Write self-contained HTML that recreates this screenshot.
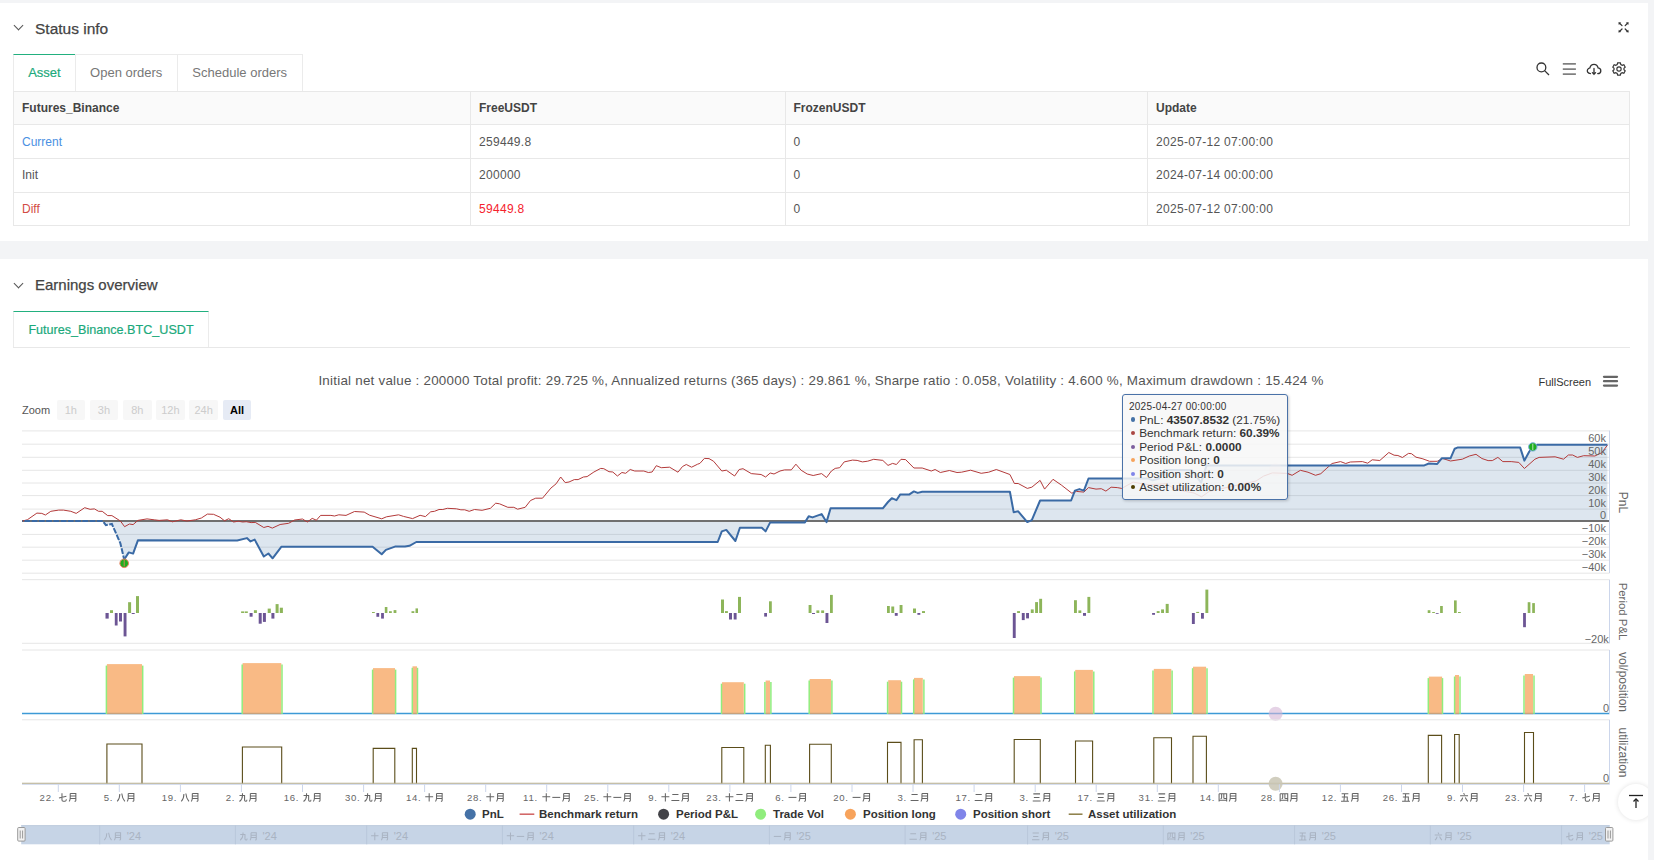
<!DOCTYPE html>
<html><head><meta charset="utf-8">
<style>
*{margin:0;padding:0;box-sizing:border-box}
html,body{width:1654px;height:860px;overflow:hidden;background:#f3f4f6;font-family:"Liberation Sans",sans-serif;color:#333}
.card{position:absolute;left:0;width:1648px;background:#fff}
.abs{position:absolute;white-space:nowrap}
.title{font-size:15.5px;color:#444;font-weight:400;-webkit-text-stroke:0.25px #444}
.chev{position:absolute;width:7px;height:7px;border-right:1.3px solid #555;border-bottom:1.3px solid #555;transform:rotate(45deg)}
.tabs{position:absolute;top:53px;left:13px;height:38px}
.tab{position:absolute;top:0;height:37px;border:1px solid #ebebeb;border-bottom:none;font-size:13px;color:#777;line-height:36px;text-align:center}
.tab.act{color:#1daa7c;border-top:1.5px solid #22b07f;line-height:35.5px;-webkit-text-stroke:0.2px #1daa7c}
table{position:absolute;left:13px;top:90.7px;width:1617px;border-collapse:collapse;font-size:12px;color:#555}
td,th{border:1px solid #e8e8e8;height:33.6px;padding:0 0 0 8px;text-align:left;vertical-align:middle}
th{background:#fafafa;font-weight:bold;color:#444;height:33.8px}
td.n{letter-spacing:0.3px}
svg text{font-family:"Liberation Sans",sans-serif}
.yl{font-size:11px;fill:#666}
.at{font-size:12px;fill:#666}
.xl{font-size:9.6px;fill:#666;letter-spacing:0.7px}
.lg{font-size:11.5px;font-weight:bold;fill:#333}
.nl{font-size:11px;fill:#a9b3c2}
.zb{position:absolute;top:400px;width:28.5px;height:19.7px;border-radius:2px;background:#f7f7f7;color:#ccc;font-size:11px;text-align:center;line-height:20px}
.tt{position:absolute;left:1122px;top:393.5px;width:165.5px;height:106.5px;background:rgba(247,247,247,0.85);border:1px solid #4a72a8;border-radius:3px;box-shadow:1px 1px 3px rgba(0,0,0,0.2);font-size:11.5px;color:#333;padding:6px 0 0 6px}
.tth{font-size:10px;line-height:12px;margin-bottom:1px;letter-spacing:0.25px}
.ttr{line-height:13.6px;white-space:nowrap;font-size:11.8px}
.ttr .d{display:inline-block;width:4.2px;height:4.2px;border-radius:50%;margin:0 4px 0 2px;vertical-align:2px}
</style></head>
<body>
<!-- card 1 -->
<div class="card" style="top:3px;height:238px">
  <div class="chev" style="left:15px;top:18.6px"></div>
  <div class="abs title" style="left:35px;top:16.5px">Status info</div>
  <svg class="abs" style="left:1612px;top:13px" width="22" height="22" viewBox="1612 16 22 22">
    <g stroke="#333" stroke-width="1.25" fill="none" stroke-linecap="round">
     <line x1="1622" y1="25.6" x2="1619.6" y2="23.3"/><line x1="1625.2" y1="25.6" x2="1627.5" y2="23.3"/>
     <line x1="1622" y1="29" x2="1619.6" y2="31.4"/><line x1="1625.2" y1="29" x2="1627.5" y2="31.4"/>
    </g>
    <g fill="#333">
     <path d="M1618.4 22.2 L1621.2 22.6 L1618.8 25 Z"/><path d="M1628.7 22.2 L1625.9 22.6 L1628.3 25 Z"/>
     <path d="M1618.4 32.5 L1621.2 32.1 L1618.8 29.7 Z"/><path d="M1628.7 32.5 L1625.9 32.1 L1628.3 29.7 Z"/>
    </g>
  </svg>
</div>
<div class="tabs" style="top:54px">
  <div class="tab act" style="left:0;width:62.8px">Asset</div>
  <div class="tab" style="left:62.3px;width:102.9px;border-left:none">Open orders</div>
  <div class="tab" style="left:164.2px;width:126px;border-left:none">Schedule orders</div>
</div>
</div>
<svg class="abs" style="left:1530px;top:55px" width="104" height="28" viewBox="1530 55 104 28">
  <g stroke="#333" stroke-width="1.3" fill="none">
    <circle cx="1541.4" cy="67.4" r="4.4"/>
    <line x1="1544.6" y1="70.6" x2="1549" y2="75"/>
  </g>
  <g stroke="#555" stroke-width="1.3">
    <line x1="1562.8" y1="63.9" x2="1575.9" y2="63.9"/>
    <line x1="1562.8" y1="69.1" x2="1575.9" y2="69.1"/>
    <line x1="1562.8" y1="74.1" x2="1575.9" y2="74.1"/>
  </g>
  <g stroke="#333" stroke-width="1.3" fill="none" stroke-linecap="round">
    <path d="M1590.5 73.6 C1587.6 73.6 1586.8 71.2 1587.6 69.5 C1588.3 68.3 1589.3 68 1589.9 67.9 C1590.5 65.2 1592.3 64.4 1594 64.4 C1595.8 64.4 1597.5 65.5 1598.1 67.9 C1599.6 68.1 1600.9 69.2 1600.8 71.1 C1600.7 72.9 1599.4 73.6 1597.7 73.6"/>
    <path d="M1594 68.5 V74.3 M1592.4 72.6 L1594 74.3 L1595.6 72.6"/>
  </g>
  <g stroke="#333" stroke-width="1.25" fill="none" transform="translate(1619 69) scale(0.9) translate(-1619 -69)">
    <path d="M1617.5 62.2 L1620.5 62.2 L1621 64 L1622.6 64.9 L1624.4 64.3 L1625.9 66.9 L1624.5 68.2 L1624.5 69.8 L1625.9 71.1 L1624.4 73.7 L1622.6 73.1 L1621 74 L1620.5 75.8 L1617.5 75.8 L1617 74 L1615.4 73.1 L1613.6 73.7 L1612.1 71.1 L1613.5 69.8 L1613.5 68.2 L1612.1 66.9 L1613.6 64.3 L1615.4 64.9 L1617 64 Z"/>
    <circle cx="1619" cy="69" r="2.4"/>
  </g>
</svg>
<table>
 <tr><th style="width:457px">Futures_Binance</th><th style="width:314.5px">FreeUSDT</th><th style="width:362.5px">FrozenUSDT</th><th>Update</th></tr>
 <tr><td style="color:#4a90e2">Current</td><td class="n">259449.8</td><td class="n">0</td><td class="n">2025-07-12 07:00:00</td></tr>
 <tr><td>Init</td><td class="n">200000</td><td class="n">0</td><td class="n">2024-07-14 00:00:00</td></tr>
 <tr><td style="color:#d24b44">Diff</td><td class="n" style="color:#f5222d">59449.8</td><td class="n">0</td><td class="n">2025-07-12 07:00:00</td></tr>
</table>

<!-- card 2 -->
<div class="card" style="top:259px;height:601px">
  <div class="chev" style="left:15px;top:21px"></div>
  <div class="abs title" style="left:35px;top:17px;font-size:15px">Earnings overview</div>
</div>
<div class="tabs" style="top:311px;height:36px">
  <div class="tab act" style="left:0;width:196px;height:36px;color:#1aa97b;font-size:12.6px;line-height:36.5px">Futures_Binance.BTC_USDT</div>
</div>
<div class="abs" style="left:13px;top:347px;width:1617px;height:1px;background:#e8e8e8"></div>

<div class="abs" style="left:0;top:372.5px;width:1642px;text-align:center;font-size:13.4px;letter-spacing:0.23px;color:#555">Initial net value : 200000 Total profit: 29.725 %, Annualized returns (365 days) : 29.861 %, Sharpe ratio : 0.058, Volatility : 4.600 %, Maximum drawdown : 15.424 %</div>
<div class="abs" style="left:1538.5px;top:376px;font-size:11px;color:#333">FullScreen</div>
<svg class="abs" style="left:1600px;top:373px" width="20" height="16"><g stroke="#666" stroke-width="2.3" stroke-linecap="round"><line x1="4" y1="3.8" x2="17" y2="3.8"/><line x1="4" y1="8.2" x2="17" y2="8.2"/><line x1="4" y1="12.6" x2="17" y2="12.6"/></g></svg>

<div class="abs" style="left:22px;top:404px;font-size:11px;color:#555">Zoom</div>
<div class="zb" style="left:56.5px">1h</div>
<div class="zb" style="left:89.7px">3h</div>
<div class="zb" style="left:123px">8h</div>
<div class="zb" style="left:156.2px">12h</div>
<div class="zb" style="left:189.4px">24h</div>
<div class="zb" style="left:222.8px;background:#e6ebf5;color:#000;font-weight:bold">All</div>

<svg class="abs" style="left:0;top:0" width="1654" height="860" viewBox="0 0 1654 860">
<line x1="22" y1="430.9" x2="1609.5" y2="430.9" stroke="#e6e6e6" stroke-width="1"/>
<line x1="22" y1="444.2" x2="1609.5" y2="444.2" stroke="#e6e6e6" stroke-width="1"/>
<line x1="22" y1="457.3" x2="1609.5" y2="457.3" stroke="#e6e6e6" stroke-width="1"/>
<line x1="22" y1="470.3" x2="1609.5" y2="470.3" stroke="#e6e6e6" stroke-width="1"/>
<line x1="22" y1="483" x2="1609.5" y2="483" stroke="#e6e6e6" stroke-width="1"/>
<line x1="22" y1="495.6" x2="1609.5" y2="495.6" stroke="#e6e6e6" stroke-width="1"/>
<line x1="22" y1="509.1" x2="1609.5" y2="509.1" stroke="#e6e6e6" stroke-width="1"/>
<line x1="22" y1="534.4" x2="1609.5" y2="534.4" stroke="#e6e6e6" stroke-width="1"/>
<line x1="22" y1="547.2" x2="1609.5" y2="547.2" stroke="#e6e6e6" stroke-width="1"/>
<line x1="22" y1="560.2" x2="1609.5" y2="560.2" stroke="#e6e6e6" stroke-width="1"/>
<line x1="22" y1="573.2" x2="1609.5" y2="573.2" stroke="#e6e6e6" stroke-width="1"/>
<path d="M22.4,521 L22.4,521.0 L102.8,521.0 L105.9,525.2 L111.9,524.0 L116.7,534.9 L120.4,543.4 L124.2,559.5 L128.8,552.4 L133.1,553.6 L137.9,540.3 L237.2,540.5 L246.9,538.1 L250.5,541.4 L254.7,539.6 L263.8,556.5 L268.4,553.5 L272.6,558.3 L281.3,546.8 L372.6,546.8 L381.7,554.3 L385.9,549.9 L395.0,546.6 L405.0,546.6 L409.5,545.8 L416.3,542.0 L717.7,542.0 L721.8,531.4 L726.3,529.9 L735.4,541.0 L739.9,527.7 L761.8,527.7 L765.6,531.4 L770.2,522.4 L804.9,522.4 L808.7,516.3 L812.5,517.4 L821.6,514.1 L826.5,522.1 L830.6,508.3 L882.8,508.3 L888.0,502.0 L891.8,498.2 L896.4,500.2 L900.3,494.4 L909.4,494.4 L913.9,491.4 L917.7,492.9 L922.2,491.8 L1009.9,491.8 L1013.7,512.2 L1018.2,511.3 L1027.3,522.1 L1031.8,520.1 L1040.1,500.5 L1071.1,500.5 L1074.9,490.6 L1079.4,489.1 L1083.9,490.6 L1088.5,478.5 L1148.3,478.5 L1152.6,480.3 L1159.2,478.5 L1164.6,470.1 L1191.8,470.1 L1201.1,482.6 L1206.5,465.6 L1424.3,465.4 L1428.9,463.5 L1437.2,464.0 L1441.7,458.3 L1450.5,458.3 L1454.7,448.7 L1457.4,447.6 L1520.2,447.6 L1524.4,460.6 L1529.3,451.5 L1532.8,447.0 L1537.0,444.8 L1607.4,444.8 L1607.4,521 Z" fill="#4572a7" fill-opacity="0.18"/>
<line x1="22" y1="521" x2="1609.5" y2="521" stroke="#707070" stroke-width="2"/>
<polyline points="22.4,521.0 27.3,519.8 36.9,513.1 41.8,513.4 45.4,515.0 50.8,511.3 58.7,510.1 63.5,510.1 70.8,511.3 76.2,513.4 84.7,507.7 90.1,509.3 94.4,508.9 98.6,511.3 102.2,511.3 107.7,515.6 111.9,515.6 120.4,521.0 124.6,526.7 129.4,524.0 133.1,524.6 137.9,520.4 147.0,518.9 154.2,519.8 159.1,520.4 167.5,519.8 172.4,521.8 180.8,519.8 186.9,521.0 195.3,519.8 201.4,518.0 207.4,514.1 213.5,514.3 220.0,517.2 224.5,520.8 228.7,518.7 233.6,522.0 238.4,521.2 242.6,522.0 246.3,521.7 251.1,522.6 255.3,522.4 263.8,527.5 268.0,526.3 272.3,528.1 280.1,524.5 288.6,523.3 294.6,520.0 302.5,519.0 307.3,522.0 312.2,518.4 316.4,520.2 320.6,515.4 330.9,515.4 334.5,516.0 338.8,514.8 346.0,515.4 354.5,511.5 364.2,512.1 369.6,515.2 381.7,518.8 386.5,516.8 398.6,514.8 403.5,516.4 412.6,518.6 420.1,515.3 425.4,516.6 430.7,511.8 434.5,511.3 439.0,509.5 442.8,509.5 447.3,508.3 456.4,508.8 460.9,509.8 464.7,509.8 469.2,511.3 474.5,509.5 482.1,510.3 490.4,508.3 495.7,503.2 499.5,503.8 507.8,507.3 513.8,507.3 517.6,509.2 525.2,507.3 530.5,500.5 535.7,498.2 542.5,498.2 550.9,488.1 556.1,483.8 560.7,477.0 565.2,482.6 569.0,482.0 574.3,479.6 578.1,479.6 583.4,477.0 587.1,476.6 593.9,472.0 600.7,468.4 603.8,468.7 609.0,471.7 612.8,472.0 617.4,476.0 621.9,472.5 625.7,473.3 630.2,469.5 634.7,471.0 643.8,471.0 648.3,472.5 652.1,472.0 656.3,465.7 661.3,467.7 669.6,467.2 678.0,472.2 682.5,466.5 686.3,464.5 691.6,467.2 697.6,464.2 699.9,463.4 704.4,458.4 709.0,458.6 713.5,461.2 721.8,471.0 726.3,470.2 734.6,476.0 739.2,469.5 743.0,468.7 751.3,473.6 761.1,474.5 765.6,477.0 770.2,473.0 774.0,474.0 780.0,471.0 784.5,469.9 791.3,469.9 795.9,464.2 801.1,470.2 807.2,474.0 813.2,475.5 821.6,473.6 826.5,477.5 831.4,471.0 835.2,468.4 839.7,467.7 844.2,461.9 852.5,460.1 857.1,460.4 862.4,461.9 867.7,461.2 873.7,459.3 882.8,460.4 888.0,465.4 892.6,463.4 896.4,464.5 901.0,459.3 905.6,459.6 913.9,468.0 922.2,468.0 931.3,471.0 935.1,469.5 940.3,472.5 949.4,470.5 957.0,472.5 961.5,472.2 970.6,470.2 981.2,473.3 988.7,472.2 996.3,469.5 1009.9,474.5 1014.4,483.5 1018.2,483.5 1027.3,488.4 1031.8,487.2 1040.1,480.4 1044.6,489.1 1053.0,479.3 1061.3,485.0 1071.8,493.2 1076.4,491.4 1083.9,492.1 1088.5,487.6 1096.0,489.1 1101.3,488.7 1105.9,491.1 1111.1,487.2 1117.2,487.6 1121.7,488.4 1133.1,482.1 1141.8,483.7 1149.4,484.8 1165.7,483.7 1175.5,489.2 1185.3,491.4 1194.0,493.0 1201.6,496.8 1209.2,491.4 1228.8,487.0 1256.0,481.0 1263.6,476.1 1272.4,472.9 1287.3,473.4 1292.1,475.3 1300.4,470.3 1308.0,472.2 1315.5,475.3 1320.8,473.7 1326.9,468.1 1332.1,463.5 1340.5,461.6 1345.7,463.5 1350.3,462.0 1362.4,461.6 1367.7,463.2 1372.2,459.8 1379.8,460.5 1388.8,452.5 1394.1,455.2 1397.9,455.5 1402.4,457.5 1408.5,453.4 1411.5,453.7 1416.0,457.2 1422.1,458.6 1429.6,461.3 1437.2,461.3 1442.8,458.5 1450.5,461.0 1462.3,459.2 1469.3,456.0 1476.0,454.3 1481.9,458.5 1488.1,460.6 1492.3,460.6 1497.9,457.4 1502.8,461.6 1511.2,461.6 1518.8,462.4 1524.4,468.5 1534.9,459.2 1539.1,457.4 1555.1,456.8 1563.5,459.2 1568.4,455.0 1572.6,455.0 1577.4,457.4 1583.7,455.7 1594.9,456.0 1601.9,452.6 1607.4,445.2" fill="none" stroke="#b33a3a" stroke-width="1" stroke-linejoin="round"/>
<polyline points="22.4,521.0 102.8,521.0 105.9,525.2 111.9,524.0 116.7,534.9 120.4,543.4 124.2,559.5" fill="none" stroke="#3a6aa5" stroke-width="2" stroke-dasharray="5.8,1.45" stroke-dashoffset="-2"/>
<polyline points="124.2,559.5 128.8,552.4 133.1,553.6 137.9,540.3 237.2,540.5 246.9,538.1 250.5,541.4 254.7,539.6 263.8,556.5 268.4,553.5 272.6,558.3 281.3,546.8 372.6,546.8 381.7,554.3 385.9,549.9 395.0,546.6 405.0,546.6 409.5,545.8 416.3,542.0 717.7,542.0 721.8,531.4 726.3,529.9 735.4,541.0 739.9,527.7 761.8,527.7 765.6,531.4 770.2,522.4 804.9,522.4 808.7,516.3 812.5,517.4 821.6,514.1 826.5,522.1 830.6,508.3 882.8,508.3 888.0,502.0 891.8,498.2 896.4,500.2 900.3,494.4 909.4,494.4 913.9,491.4 917.7,492.9 922.2,491.8 1009.9,491.8 1013.7,512.2 1018.2,511.3 1027.3,522.1 1031.8,520.1 1040.1,500.5 1071.1,500.5 1074.9,490.6 1079.4,489.1 1083.9,490.6 1088.5,478.5 1148.3,478.5 1152.6,480.3 1159.2,478.5 1164.6,470.1 1191.8,470.1 1201.1,482.6 1206.5,465.6 1424.3,465.4 1428.9,463.5 1437.2,464.0 1441.7,458.3 1450.5,458.3 1454.7,448.7 1457.4,447.6 1520.2,447.6 1524.4,460.6 1529.3,451.5 1532.8,447.0 1537.0,444.8 1607.4,444.8" fill="none" stroke="#3a6aa5" stroke-width="2" stroke-linejoin="round"/>
<circle cx="124.2" cy="563.3" r="4.3" fill="#1fae1f" stroke="#f08060" stroke-width="1"/>
<line x1="124.2" y1="560" x2="124.2" y2="566.5" stroke="#f08060" stroke-width="0.8"/>
<circle cx="1532.8" cy="446.9" r="4.2" fill="#1fae1f" stroke="#7ab0e0" stroke-width="1"/>
<line x1="1532.8" y1="443.7" x2="1532.8" y2="450" stroke="#e0f0e0" stroke-width="0.8"/>
<circle cx="1275.6" cy="469.6" r="6.5" fill="#f0c0c0" fill-opacity="0.25"/>
<text x="1606" y="442.4" text-anchor="end" class="yl">60k</text>
<text x="1606" y="455.4" text-anchor="end" class="yl">50k</text>
<text x="1606" y="468.4" text-anchor="end" class="yl">40k</text>
<text x="1606" y="481.4" text-anchor="end" class="yl">30k</text>
<text x="1606" y="494.4" text-anchor="end" class="yl">20k</text>
<text x="1606" y="507.4" text-anchor="end" class="yl">10k</text>
<text x="1606" y="519.4" text-anchor="end" class="yl">0</text>
<text x="1606" y="532.4" text-anchor="end" class="yl">−10k</text>
<text x="1606" y="545.4" text-anchor="end" class="yl">−20k</text>
<text x="1606" y="558.4" text-anchor="end" class="yl">−30k</text>
<text x="1606" y="571.4" text-anchor="end" class="yl">−40k</text>
<line x1="1609.5" y1="430.5" x2="1609.5" y2="573" stroke="#ccd6eb" stroke-width="1"/>
<text class="at" transform="translate(1618.5,502.5) rotate(90)" text-anchor="middle">PnL</text>
<line x1="22" y1="579.7" x2="1609.5" y2="579.7" stroke="#e6e6e6"/>
<line x1="22" y1="643.3" x2="1609.5" y2="643.3" stroke="#e6e6e6"/>
<rect x="110.0" y="610.2" width="3.0" height="2.8" fill="#8db55a"/>
<rect x="128.1" y="602.2" width="3.0" height="10.8" fill="#8db55a"/>
<rect x="136.0" y="596.1" width="3.0" height="16.9" fill="#8db55a"/>
<rect x="241.1" y="611.4" width="3.1" height="1.6" fill="#8db55a"/>
<rect x="244.8" y="611.4" width="3.0" height="1.6" fill="#8db55a"/>
<rect x="253.9" y="610.2" width="3.0" height="2.8" fill="#8db55a"/>
<rect x="267.7" y="608.6" width="3.1" height="4.4" fill="#8db55a"/>
<rect x="275.6" y="604.1" width="3.0" height="8.9" fill="#8db55a"/>
<rect x="279.8" y="607.7" width="3.1" height="5.3" fill="#8db55a"/>
<rect x="372.0" y="612.0" width="2.8" height="1.0" fill="#8db55a"/>
<rect x="384.8" y="607.0" width="2.6" height="6.0" fill="#8db55a"/>
<rect x="389.0" y="611.2" width="2.8" height="1.8" fill="#8db55a"/>
<rect x="393.6" y="610.1" width="2.8" height="2.9" fill="#8db55a"/>
<rect x="411.5" y="611.2" width="2.8" height="1.8" fill="#8db55a"/>
<rect x="415.5" y="608.4" width="2.5" height="4.6" fill="#8db55a"/>
<rect x="721.0" y="599.5" width="3.0" height="13.5" fill="#8db55a"/>
<rect x="725.0" y="611.1" width="2.9" height="1.9" fill="#8db55a"/>
<rect x="738.0" y="596.9" width="3.0" height="16.1" fill="#8db55a"/>
<rect x="769.0" y="601.3" width="2.8" height="11.7" fill="#8db55a"/>
<rect x="808.6" y="605.0" width="2.9" height="8.0" fill="#8db55a"/>
<rect x="816.4" y="610.4" width="2.9" height="2.6" fill="#8db55a"/>
<rect x="821.2" y="610.4" width="2.9" height="2.6" fill="#8db55a"/>
<rect x="830.0" y="594.9" width="2.8" height="18.1" fill="#8db55a"/>
<rect x="887.0" y="606.0" width="2.8" height="7.0" fill="#8db55a"/>
<rect x="891.3" y="606.5" width="2.9" height="6.5" fill="#8db55a"/>
<rect x="899.6" y="605.0" width="2.9" height="8.0" fill="#8db55a"/>
<rect x="913.0" y="608.5" width="3.0" height="4.5" fill="#8db55a"/>
<rect x="922.0" y="611.1" width="3.0" height="1.9" fill="#8db55a"/>
<rect x="1017.1" y="611.1" width="2.9" height="1.9" fill="#8db55a"/>
<rect x="1030.8" y="609.4" width="2.9" height="3.6" fill="#8db55a"/>
<rect x="1035.1" y="602.1" width="2.9" height="10.9" fill="#8db55a"/>
<rect x="1039.2" y="598.8" width="2.9" height="14.2" fill="#8db55a"/>
<rect x="1074.0" y="600.2" width="2.9" height="12.8" fill="#8db55a"/>
<rect x="1078.4" y="610.4" width="2.9" height="2.6" fill="#8db55a"/>
<rect x="1087.4" y="596.9" width="2.9" height="16.1" fill="#8db55a"/>
<rect x="1156.7" y="611.1" width="2.9" height="1.9" fill="#8db55a"/>
<rect x="1161.1" y="609.4" width="2.9" height="3.6" fill="#8db55a"/>
<rect x="1165.7" y="603.9" width="3.0" height="9.1" fill="#8db55a"/>
<rect x="1196.2" y="611.9" width="2.9" height="1.1" fill="#8db55a"/>
<rect x="1205.4" y="589.6" width="2.9" height="23.4" fill="#8db55a"/>
<rect x="1427.7" y="610.2" width="2.7" height="2.8" fill="#8db55a"/>
<rect x="1432.2" y="612.0" width="2.7" height="1.0" fill="#8db55a"/>
<rect x="1440.1" y="606.0" width="2.7" height="7.0" fill="#8db55a"/>
<rect x="1454.0" y="600.4" width="2.7" height="12.6" fill="#8db55a"/>
<rect x="1458.0" y="612.0" width="2.8" height="1.0" fill="#8db55a"/>
<rect x="1527.7" y="602.2" width="2.7" height="10.8" fill="#8db55a"/>
<rect x="1532.2" y="603.1" width="2.7" height="9.9" fill="#8db55a"/>
<rect x="105.5" y="613" width="3.2" height="5.6" fill="#6c5594"/>
<rect x="114.8" y="613" width="2.8" height="12.5" fill="#6c5594"/>
<rect x="119.0" y="613" width="3.0" height="8.5" fill="#6c5594"/>
<rect x="123.6" y="613" width="2.9" height="23.4" fill="#6c5594"/>
<rect x="131.7" y="613" width="3.0" height="1.0" fill="#6c5594"/>
<rect x="249.6" y="613" width="3.0" height="3.7" fill="#6c5594"/>
<rect x="258.7" y="613" width="3.0" height="10.7" fill="#6c5594"/>
<rect x="262.9" y="613" width="3.0" height="8.9" fill="#6c5594"/>
<rect x="271.4" y="613" width="3.0" height="5.6" fill="#6c5594"/>
<rect x="376.4" y="613" width="2.8" height="3.8" fill="#6c5594"/>
<rect x="381.1" y="613" width="2.8" height="5.6" fill="#6c5594"/>
<rect x="729.0" y="613" width="3.0" height="6.5" fill="#6c5594"/>
<rect x="733.7" y="613" width="2.9" height="6.5" fill="#6c5594"/>
<rect x="764.2" y="613" width="2.8" height="3.6" fill="#6c5594"/>
<rect x="812.0" y="613" width="3.0" height="1.0" fill="#6c5594"/>
<rect x="825.5" y="613" width="2.9" height="10.0" fill="#6c5594"/>
<rect x="894.8" y="613" width="2.9" height="2.8" fill="#6c5594"/>
<rect x="917.4" y="613" width="2.9" height="1.8" fill="#6c5594"/>
<rect x="1012.8" y="613" width="2.9" height="25.0" fill="#6c5594"/>
<rect x="1021.8" y="613" width="2.9" height="7.1" fill="#6c5594"/>
<rect x="1026.1" y="613" width="2.9" height="5.4" fill="#6c5594"/>
<rect x="1083.0" y="613" width="3.0" height="2.8" fill="#6c5594"/>
<rect x="1152.1" y="613" width="2.9" height="1.8" fill="#6c5594"/>
<rect x="1191.9" y="613" width="2.9" height="11.0" fill="#6c5594"/>
<rect x="1201.0" y="613" width="2.9" height="5.7" fill="#6c5594"/>
<rect x="1435.8" y="613" width="2.8" height="0.8" fill="#6c5594"/>
<rect x="1523.1" y="613" width="2.8" height="14.2" fill="#6c5594"/>
<line x1="1609.5" y1="579.7" x2="1609.5" y2="643.3" stroke="#ccd6eb"/>
<text x="1608.8" y="642.8" text-anchor="end" class="yl">−20k</text>
<text class="at" style="font-size:11.4px" transform="translate(1618.5,611.5) rotate(90)" text-anchor="middle">Period P&amp;L</text>
<line x1="22" y1="650" x2="1609.5" y2="650" stroke="#e6e6e6"/>
<line x1="22" y1="713.5" x2="1609.5" y2="713.5" stroke="#3d9ad6" stroke-width="1.4"/>
<rect x="106.9" y="664.1" width="35.1" height="50.1" fill="#f7a35c" fill-opacity="0.75"/>
<line x1="106.4" y1="665.6" x2="106.4" y2="714" stroke="#90ed7d" stroke-width="1.5"/>
<line x1="142.7" y1="665.6" x2="142.7" y2="714" stroke="#90ed7d" stroke-width="1.5"/>
<rect x="242.6" y="663.1" width="38.7" height="51.1" fill="#f7a35c" fill-opacity="0.75"/>
<line x1="242.2" y1="664.6" x2="242.2" y2="714" stroke="#90ed7d" stroke-width="1.5"/>
<line x1="282.0" y1="664.6" x2="282.0" y2="714" stroke="#90ed7d" stroke-width="1.5"/>
<rect x="373.0" y="668.1" width="22.0" height="46.1" fill="#f7a35c" fill-opacity="0.75"/>
<line x1="372.6" y1="669.6" x2="372.6" y2="714" stroke="#90ed7d" stroke-width="1.5"/>
<line x1="395.6" y1="669.6" x2="395.6" y2="714" stroke="#90ed7d" stroke-width="1.5"/>
<rect x="412.5" y="666.3" width="4.5" height="47.9" fill="#f7a35c" fill-opacity="0.75"/>
<line x1="412.3" y1="667.8" x2="412.3" y2="714" stroke="#90ed7d" stroke-width="1.5"/>
<line x1="417.5" y1="667.8" x2="417.5" y2="714" stroke="#90ed7d" stroke-width="1.5"/>
<rect x="722.0" y="682.2" width="21.8" height="32.0" fill="#f7a35c" fill-opacity="0.75"/>
<line x1="721.5" y1="683.7" x2="721.5" y2="714" stroke="#90ed7d" stroke-width="1.5"/>
<line x1="744.7" y1="683.7" x2="744.7" y2="714" stroke="#90ed7d" stroke-width="1.5"/>
<rect x="765.6" y="680.5" width="4.4" height="33.7" fill="#f7a35c" fill-opacity="0.75"/>
<line x1="764.9" y1="682.0" x2="764.9" y2="714" stroke="#90ed7d" stroke-width="1.5"/>
<line x1="770.9" y1="682.0" x2="770.9" y2="714" stroke="#90ed7d" stroke-width="1.5"/>
<rect x="809.6" y="679.0" width="21.4" height="35.2" fill="#f7a35c" fill-opacity="0.75"/>
<line x1="809.2" y1="680.5" x2="809.2" y2="714" stroke="#90ed7d" stroke-width="1.5"/>
<line x1="831.9" y1="680.5" x2="831.9" y2="714" stroke="#90ed7d" stroke-width="1.5"/>
<rect x="888.2" y="680.2" width="12.8" height="34.0" fill="#f7a35c" fill-opacity="0.75"/>
<line x1="887.6" y1="681.7" x2="887.6" y2="714" stroke="#90ed7d" stroke-width="1.5"/>
<line x1="901.5" y1="681.7" x2="901.5" y2="714" stroke="#90ed7d" stroke-width="1.5"/>
<rect x="914.0" y="677.9" width="8.8" height="36.3" fill="#f7a35c" fill-opacity="0.75"/>
<line x1="913.7" y1="679.4" x2="913.7" y2="714" stroke="#90ed7d" stroke-width="1.5"/>
<line x1="923.9" y1="679.4" x2="923.9" y2="714" stroke="#90ed7d" stroke-width="1.5"/>
<rect x="1014.0" y="676.1" width="26.3" height="38.1" fill="#f7a35c" fill-opacity="0.75"/>
<line x1="1013.5" y1="677.6" x2="1013.5" y2="714" stroke="#90ed7d" stroke-width="1.5"/>
<line x1="1041.0" y1="677.6" x2="1041.0" y2="714" stroke="#90ed7d" stroke-width="1.5"/>
<rect x="1075.2" y="669.9" width="17.7" height="44.3" fill="#f7a35c" fill-opacity="0.75"/>
<line x1="1074.7" y1="671.4" x2="1074.7" y2="714" stroke="#90ed7d" stroke-width="1.5"/>
<line x1="1093.8" y1="671.4" x2="1093.8" y2="714" stroke="#90ed7d" stroke-width="1.5"/>
<rect x="1153.8" y="668.9" width="17.5" height="45.3" fill="#f7a35c" fill-opacity="0.75"/>
<line x1="1153.0" y1="670.4" x2="1153.0" y2="714" stroke="#90ed7d" stroke-width="1.5"/>
<line x1="1172.1" y1="670.4" x2="1172.1" y2="714" stroke="#90ed7d" stroke-width="1.5"/>
<rect x="1193.0" y="666.7" width="13.1" height="47.5" fill="#f7a35c" fill-opacity="0.75"/>
<line x1="1192.6" y1="668.2" x2="1192.6" y2="714" stroke="#90ed7d" stroke-width="1.5"/>
<line x1="1207.0" y1="668.2" x2="1207.0" y2="714" stroke="#90ed7d" stroke-width="1.5"/>
<rect x="1428.8" y="676.6" width="13.3" height="37.6" fill="#f7a35c" fill-opacity="0.75"/>
<line x1="1428.3" y1="678.1" x2="1428.3" y2="714" stroke="#90ed7d" stroke-width="1.5"/>
<line x1="1442.5" y1="678.1" x2="1442.5" y2="714" stroke="#90ed7d" stroke-width="1.5"/>
<rect x="1455.0" y="675.0" width="4.0" height="39.2" fill="#f7a35c" fill-opacity="0.75"/>
<line x1="1454.6" y1="676.5" x2="1454.6" y2="714" stroke="#90ed7d" stroke-width="1.5"/>
<line x1="1460.0" y1="676.5" x2="1460.0" y2="714" stroke="#90ed7d" stroke-width="1.5"/>
<rect x="1524.8" y="674.0" width="8.2" height="40.2" fill="#f7a35c" fill-opacity="0.75"/>
<line x1="1524.0" y1="675.5" x2="1524.0" y2="714" stroke="#90ed7d" stroke-width="1.5"/>
<line x1="1534.0" y1="675.5" x2="1534.0" y2="714" stroke="#90ed7d" stroke-width="1.5"/>
<line x1="1609.5" y1="650" x2="1609.5" y2="714" stroke="#ccd6eb"/>
<text x="1609" y="712.4" text-anchor="end" class="yl">0</text>
<text class="at" transform="translate(1618.5,682) rotate(90)" text-anchor="middle">vol/position</text>
<circle cx="1275.6" cy="713.8" r="7" fill="#d4b6d6" fill-opacity="0.6"/>
<line x1="22" y1="719.8" x2="1609.5" y2="719.8" stroke="#e6e6e6"/>
<line x1="22" y1="784.3" x2="1609.5" y2="784.3" stroke="#ccd6eb" stroke-width="1"/>
<polyline points="106.9,783.4 106.9,744 142,744 142,783.4" fill="none" stroke="#5b4d1a" stroke-width="1.1"/>
<polyline points="242.4,783.4 242.4,747 281.7,747 281.7,783.4" fill="none" stroke="#5b4d1a" stroke-width="1.1"/>
<polyline points="373.2,783.4 373.2,748.4 394.8,748.4 394.8,783.4" fill="none" stroke="#5b4d1a" stroke-width="1.1"/>
<polyline points="412.3,783.4 412.3,748.4 416.5,748.4 416.5,783.4" fill="none" stroke="#5b4d1a" stroke-width="1.1"/>
<polyline points="721.8,783.4 721.8,747.5 743.8,747.5 743.8,783.4" fill="none" stroke="#5b4d1a" stroke-width="1.1"/>
<polyline points="765.3,783.4 765.3,745.3 770.4,745.3 770.4,783.4" fill="none" stroke="#5b4d1a" stroke-width="1.1"/>
<polyline points="809.6,783.4 809.6,744.3 831.3,744.3 831.3,783.4" fill="none" stroke="#5b4d1a" stroke-width="1.1"/>
<polyline points="887.5,783.4 887.5,742.4 901,742.4 901,783.4" fill="none" stroke="#5b4d1a" stroke-width="1.1"/>
<polyline points="914.1,783.4 914.1,739.8 922.4,739.8 922.4,783.4" fill="none" stroke="#5b4d1a" stroke-width="1.1"/>
<polyline points="1014.2,783.4 1014.2,739.5 1040.3,739.5 1040.3,783.4" fill="none" stroke="#5b4d1a" stroke-width="1.1"/>
<polyline points="1075.5,783.4 1075.5,741 1092.6,741 1092.6,783.4" fill="none" stroke="#5b4d1a" stroke-width="1.1"/>
<polyline points="1153.8,783.4 1153.8,737.8 1171.5,737.8 1171.5,783.4" fill="none" stroke="#5b4d1a" stroke-width="1.1"/>
<polyline points="1193,783.4 1193,736.3 1206.4,736.3 1206.4,783.4" fill="none" stroke="#5b4d1a" stroke-width="1.1"/>
<polyline points="1428.3,783.4 1428.3,735.4 1441.6,735.4 1441.6,783.4" fill="none" stroke="#5b4d1a" stroke-width="1.1"/>
<polyline points="1454.6,783.4 1454.6,734.5 1459.2,734.5 1459.2,783.4" fill="none" stroke="#5b4d1a" stroke-width="1.1"/>
<polyline points="1524.5,783.4 1524.5,732.5 1533.5,732.5 1533.5,783.4" fill="none" stroke="#5b4d1a" stroke-width="1.1"/>
<line x1="22" y1="783.3" x2="1609.5" y2="783.3" stroke="#b5ad8c" stroke-width="1.1"/>
<line x1="1609.5" y1="719.8" x2="1609.5" y2="784.3" stroke="#ccd6eb"/>
<text x="1609" y="782" text-anchor="end" class="yl">0</text>
<text class="at" transform="translate(1618.5,752.5) rotate(90)" text-anchor="middle">utilization</text>
<circle cx="1275.6" cy="783.8" r="7" fill="#c9c6b4" fill-opacity="0.85"/>
<line x1="58.3" y1="784.3" x2="58.3" y2="792" stroke="#ccd6eb"/>
<text x="39.6" y="800.8" class="xl">22.</text>
<path d="M0.6,5.6L9,3.6M4,0.3V8Q4,9.3 5.5,9.3H7.6Q8.9,9.3 9,7.2" transform="translate(58.45,793.00) scale(0.880)" fill="none" stroke="#666" stroke-width="1.193"/>
<path d="M2,0.6H8.4V8.4Q8.4,9.5 7,9.5M2,0.6V5.8Q2,8.2 0.8,9.7M2,3.5H8.4M2,6.2H8.4" transform="translate(68.45,793.00) scale(0.880)" fill="none" stroke="#666" stroke-width="1.193"/>
<line x1="119.3" y1="784.3" x2="119.3" y2="792" stroke="#ccd6eb"/>
<text x="103.7" y="800.8" class="xl">5.</text>
<path d="M3.8,1.2C3.8,4.8 3,7.5 0.8,9.6M6,0.6C6.3,4 7.5,7 9.5,9.5" transform="translate(116.48,793.00) scale(0.880)" fill="none" stroke="#666" stroke-width="1.193"/>
<path d="M2,0.6H8.4V8.4Q8.4,9.5 7,9.5M2,0.6V5.8Q2,8.2 0.8,9.7M2,3.5H8.4M2,6.2H8.4" transform="translate(126.48,793.00) scale(0.880)" fill="none" stroke="#666" stroke-width="1.193"/>
<line x1="180.4" y1="784.3" x2="180.4" y2="792" stroke="#ccd6eb"/>
<text x="161.7" y="800.8" class="xl">19.</text>
<path d="M3.8,1.2C3.8,4.8 3,7.5 0.8,9.6M6,0.6C6.3,4 7.5,7 9.5,9.5" transform="translate(180.56,793.00) scale(0.880)" fill="none" stroke="#666" stroke-width="1.193"/>
<path d="M2,0.6H8.4V8.4Q8.4,9.5 7,9.5M2,0.6V5.8Q2,8.2 0.8,9.7M2,3.5H8.4M2,6.2H8.4" transform="translate(190.56,793.00) scale(0.880)" fill="none" stroke="#666" stroke-width="1.193"/>
<line x1="241.4" y1="784.3" x2="241.4" y2="792" stroke="#ccd6eb"/>
<text x="225.8" y="800.8" class="xl">2.</text>
<path d="M1,2.8H6.8V8.3Q6.8,9.4 8,9.4H8.6Q9.4,9.4 9.4,7.6M4.4,0.2V2.8Q4.4,7 1,9.7" transform="translate(238.59,793.00) scale(0.880)" fill="none" stroke="#666" stroke-width="1.193"/>
<path d="M2,0.6H8.4V8.4Q8.4,9.5 7,9.5M2,0.6V5.8Q2,8.2 0.8,9.7M2,3.5H8.4M2,6.2H8.4" transform="translate(248.59,793.00) scale(0.880)" fill="none" stroke="#666" stroke-width="1.193"/>
<line x1="302.5" y1="784.3" x2="302.5" y2="792" stroke="#ccd6eb"/>
<text x="283.8" y="800.8" class="xl">16.</text>
<path d="M1,2.8H6.8V8.3Q6.8,9.4 8,9.4H8.6Q9.4,9.4 9.4,7.6M4.4,0.2V2.8Q4.4,7 1,9.7" transform="translate(302.66,793.00) scale(0.880)" fill="none" stroke="#666" stroke-width="1.193"/>
<path d="M2,0.6H8.4V8.4Q8.4,9.5 7,9.5M2,0.6V5.8Q2,8.2 0.8,9.7M2,3.5H8.4M2,6.2H8.4" transform="translate(312.66,793.00) scale(0.880)" fill="none" stroke="#666" stroke-width="1.193"/>
<line x1="363.6" y1="784.3" x2="363.6" y2="792" stroke="#ccd6eb"/>
<text x="344.9" y="800.8" class="xl">30.</text>
<path d="M1,2.8H6.8V8.3Q6.8,9.4 8,9.4H8.6Q9.4,9.4 9.4,7.6M4.4,0.2V2.8Q4.4,7 1,9.7" transform="translate(363.72,793.00) scale(0.880)" fill="none" stroke="#666" stroke-width="1.193"/>
<path d="M2,0.6H8.4V8.4Q8.4,9.5 7,9.5M2,0.6V5.8Q2,8.2 0.8,9.7M2,3.5H8.4M2,6.2H8.4" transform="translate(373.72,793.00) scale(0.880)" fill="none" stroke="#666" stroke-width="1.193"/>
<line x1="424.6" y1="784.3" x2="424.6" y2="792" stroke="#ccd6eb"/>
<text x="406.0" y="800.8" class="xl">14.</text>
<path d="M0.5,4.2H9.5M5,0.2V9.8" transform="translate(424.77,793.00) scale(0.880)" fill="none" stroke="#666" stroke-width="1.193"/>
<path d="M2,0.6H8.4V8.4Q8.4,9.5 7,9.5M2,0.6V5.8Q2,8.2 0.8,9.7M2,3.5H8.4M2,6.2H8.4" transform="translate(434.77,793.00) scale(0.880)" fill="none" stroke="#666" stroke-width="1.193"/>
<line x1="485.7" y1="784.3" x2="485.7" y2="792" stroke="#ccd6eb"/>
<text x="467.0" y="800.8" class="xl">28.</text>
<path d="M0.5,4.2H9.5M5,0.2V9.8" transform="translate(485.83,793.00) scale(0.880)" fill="none" stroke="#666" stroke-width="1.193"/>
<path d="M2,0.6H8.4V8.4Q8.4,9.5 7,9.5M2,0.6V5.8Q2,8.2 0.8,9.7M2,3.5H8.4M2,6.2H8.4" transform="translate(495.83,793.00) scale(0.880)" fill="none" stroke="#666" stroke-width="1.193"/>
<line x1="546.7" y1="784.3" x2="546.7" y2="792" stroke="#ccd6eb"/>
<text x="523.1" y="800.8" class="xl">11.</text>
<path d="M0.5,4.2H9.5M5,0.2V9.8" transform="translate(541.88,793.00) scale(0.880)" fill="none" stroke="#666" stroke-width="1.193"/>
<path d="M0.5,5H9.5" transform="translate(551.88,793.00) scale(0.880)" fill="none" stroke="#666" stroke-width="1.193"/>
<path d="M2,0.6H8.4V8.4Q8.4,9.5 7,9.5M2,0.6V5.8Q2,8.2 0.8,9.7M2,3.5H8.4M2,6.2H8.4" transform="translate(561.88,793.00) scale(0.880)" fill="none" stroke="#666" stroke-width="1.193"/>
<line x1="607.8" y1="784.3" x2="607.8" y2="792" stroke="#ccd6eb"/>
<text x="584.1" y="800.8" class="xl">25.</text>
<path d="M0.5,4.2H9.5M5,0.2V9.8" transform="translate(602.93,793.00) scale(0.880)" fill="none" stroke="#666" stroke-width="1.193"/>
<path d="M0.5,5H9.5" transform="translate(612.93,793.00) scale(0.880)" fill="none" stroke="#666" stroke-width="1.193"/>
<path d="M2,0.6H8.4V8.4Q8.4,9.5 7,9.5M2,0.6V5.8Q2,8.2 0.8,9.7M2,3.5H8.4M2,6.2H8.4" transform="translate(622.93,793.00) scale(0.880)" fill="none" stroke="#666" stroke-width="1.193"/>
<line x1="668.8" y1="784.3" x2="668.8" y2="792" stroke="#ccd6eb"/>
<text x="648.2" y="800.8" class="xl">9.</text>
<path d="M0.5,4.2H9.5M5,0.2V9.8" transform="translate(660.97,793.00) scale(0.880)" fill="none" stroke="#666" stroke-width="1.193"/>
<path d="M1.5,1.8H8.5M0.5,8.6H9.5" transform="translate(670.97,793.00) scale(0.880)" fill="none" stroke="#666" stroke-width="1.193"/>
<path d="M2,0.6H8.4V8.4Q8.4,9.5 7,9.5M2,0.6V5.8Q2,8.2 0.8,9.7M2,3.5H8.4M2,6.2H8.4" transform="translate(680.97,793.00) scale(0.880)" fill="none" stroke="#666" stroke-width="1.193"/>
<line x1="729.9" y1="784.3" x2="729.9" y2="792" stroke="#ccd6eb"/>
<text x="706.2" y="800.8" class="xl">23.</text>
<path d="M0.5,4.2H9.5M5,0.2V9.8" transform="translate(725.04,793.00) scale(0.880)" fill="none" stroke="#666" stroke-width="1.193"/>
<path d="M1.5,1.8H8.5M0.5,8.6H9.5" transform="translate(735.04,793.00) scale(0.880)" fill="none" stroke="#666" stroke-width="1.193"/>
<path d="M2,0.6H8.4V8.4Q8.4,9.5 7,9.5M2,0.6V5.8Q2,8.2 0.8,9.7M2,3.5H8.4M2,6.2H8.4" transform="translate(745.04,793.00) scale(0.880)" fill="none" stroke="#666" stroke-width="1.193"/>
<line x1="790.9" y1="784.3" x2="790.9" y2="792" stroke="#ccd6eb"/>
<text x="775.3" y="800.8" class="xl">6.</text>
<path d="M0.5,5H9.5" transform="translate(788.08,793.00) scale(0.880)" fill="none" stroke="#666" stroke-width="1.193"/>
<path d="M2,0.6H8.4V8.4Q8.4,9.5 7,9.5M2,0.6V5.8Q2,8.2 0.8,9.7M2,3.5H8.4M2,6.2H8.4" transform="translate(798.08,793.00) scale(0.880)" fill="none" stroke="#666" stroke-width="1.193"/>
<line x1="852.0" y1="784.3" x2="852.0" y2="792" stroke="#ccd6eb"/>
<text x="833.3" y="800.8" class="xl">20.</text>
<path d="M0.5,5H9.5" transform="translate(852.15,793.00) scale(0.880)" fill="none" stroke="#666" stroke-width="1.193"/>
<path d="M2,0.6H8.4V8.4Q8.4,9.5 7,9.5M2,0.6V5.8Q2,8.2 0.8,9.7M2,3.5H8.4M2,6.2H8.4" transform="translate(862.15,793.00) scale(0.880)" fill="none" stroke="#666" stroke-width="1.193"/>
<line x1="913.0" y1="784.3" x2="913.0" y2="792" stroke="#ccd6eb"/>
<text x="897.4" y="800.8" class="xl">3.</text>
<path d="M1.5,1.8H8.5M0.5,8.6H9.5" transform="translate(910.18,793.00) scale(0.880)" fill="none" stroke="#666" stroke-width="1.193"/>
<path d="M2,0.6H8.4V8.4Q8.4,9.5 7,9.5M2,0.6V5.8Q2,8.2 0.8,9.7M2,3.5H8.4M2,6.2H8.4" transform="translate(920.18,793.00) scale(0.880)" fill="none" stroke="#666" stroke-width="1.193"/>
<line x1="974.1" y1="784.3" x2="974.1" y2="792" stroke="#ccd6eb"/>
<text x="955.4" y="800.8" class="xl">17.</text>
<path d="M1.5,1.8H8.5M0.5,8.6H9.5" transform="translate(974.26,793.00) scale(0.880)" fill="none" stroke="#666" stroke-width="1.193"/>
<path d="M2,0.6H8.4V8.4Q8.4,9.5 7,9.5M2,0.6V5.8Q2,8.2 0.8,9.7M2,3.5H8.4M2,6.2H8.4" transform="translate(984.26,793.00) scale(0.880)" fill="none" stroke="#666" stroke-width="1.193"/>
<line x1="1035.2" y1="784.3" x2="1035.2" y2="792" stroke="#ccd6eb"/>
<text x="1019.5" y="800.8" class="xl">3.</text>
<path d="M1.2,1H8.8M1.8,5H8.2M0.5,9.2H9.5" transform="translate(1032.29,793.00) scale(0.880)" fill="none" stroke="#666" stroke-width="1.193"/>
<path d="M2,0.6H8.4V8.4Q8.4,9.5 7,9.5M2,0.6V5.8Q2,8.2 0.8,9.7M2,3.5H8.4M2,6.2H8.4" transform="translate(1042.29,793.00) scale(0.880)" fill="none" stroke="#666" stroke-width="1.193"/>
<line x1="1096.2" y1="784.3" x2="1096.2" y2="792" stroke="#ccd6eb"/>
<text x="1077.5" y="800.8" class="xl">17.</text>
<path d="M1.2,1H8.8M1.8,5H8.2M0.5,9.2H9.5" transform="translate(1096.37,793.00) scale(0.880)" fill="none" stroke="#666" stroke-width="1.193"/>
<path d="M2,0.6H8.4V8.4Q8.4,9.5 7,9.5M2,0.6V5.8Q2,8.2 0.8,9.7M2,3.5H8.4M2,6.2H8.4" transform="translate(1106.37,793.00) scale(0.880)" fill="none" stroke="#666" stroke-width="1.193"/>
<line x1="1157.3" y1="784.3" x2="1157.3" y2="792" stroke="#ccd6eb"/>
<text x="1138.6" y="800.8" class="xl">31.</text>
<path d="M1.2,1H8.8M1.8,5H8.2M0.5,9.2H9.5" transform="translate(1157.42,793.00) scale(0.880)" fill="none" stroke="#666" stroke-width="1.193"/>
<path d="M2,0.6H8.4V8.4Q8.4,9.5 7,9.5M2,0.6V5.8Q2,8.2 0.8,9.7M2,3.5H8.4M2,6.2H8.4" transform="translate(1167.42,793.00) scale(0.880)" fill="none" stroke="#666" stroke-width="1.193"/>
<line x1="1218.3" y1="784.3" x2="1218.3" y2="792" stroke="#ccd6eb"/>
<text x="1199.7" y="800.8" class="xl">14.</text>
<path d="M0.7,0.8H9.3V9.6M0.7,0.8V9.6M0.7,8.2H9.3M3.6,0.8V5Q3.6,6.2 2.4,6.4M6.1,0.8V5.6Q6.1,6.3 7,6.3H9.3" transform="translate(1218.47,793.00) scale(0.880)" fill="none" stroke="#666" stroke-width="1.193"/>
<path d="M2,0.6H8.4V8.4Q8.4,9.5 7,9.5M2,0.6V5.8Q2,8.2 0.8,9.7M2,3.5H8.4M2,6.2H8.4" transform="translate(1228.47,793.00) scale(0.880)" fill="none" stroke="#666" stroke-width="1.193"/>
<line x1="1279.4" y1="784.3" x2="1279.4" y2="792" stroke="#ccd6eb"/>
<text x="1260.7" y="800.8" class="xl">28.</text>
<path d="M0.7,0.8H9.3V9.6M0.7,0.8V9.6M0.7,8.2H9.3M3.6,0.8V5Q3.6,6.2 2.4,6.4M6.1,0.8V5.6Q6.1,6.3 7,6.3H9.3" transform="translate(1279.53,793.00) scale(0.880)" fill="none" stroke="#666" stroke-width="1.193"/>
<path d="M2,0.6H8.4V8.4Q8.4,9.5 7,9.5M2,0.6V5.8Q2,8.2 0.8,9.7M2,3.5H8.4M2,6.2H8.4" transform="translate(1289.53,793.00) scale(0.880)" fill="none" stroke="#666" stroke-width="1.193"/>
<line x1="1340.4" y1="784.3" x2="1340.4" y2="792" stroke="#ccd6eb"/>
<text x="1321.8" y="800.8" class="xl">12.</text>
<path d="M1.2,0.8H8.8M4.6,0.8L3.8,9.2M1.4,4.6H7.6V9.2M0.5,9.3H9.5" transform="translate(1340.58,793.00) scale(0.880)" fill="none" stroke="#666" stroke-width="1.193"/>
<path d="M2,0.6H8.4V8.4Q8.4,9.5 7,9.5M2,0.6V5.8Q2,8.2 0.8,9.7M2,3.5H8.4M2,6.2H8.4" transform="translate(1350.58,793.00) scale(0.880)" fill="none" stroke="#666" stroke-width="1.193"/>
<line x1="1401.5" y1="784.3" x2="1401.5" y2="792" stroke="#ccd6eb"/>
<text x="1382.8" y="800.8" class="xl">26.</text>
<path d="M1.2,0.8H8.8M4.6,0.8L3.8,9.2M1.4,4.6H7.6V9.2M0.5,9.3H9.5" transform="translate(1401.64,793.00) scale(0.880)" fill="none" stroke="#666" stroke-width="1.193"/>
<path d="M2,0.6H8.4V8.4Q8.4,9.5 7,9.5M2,0.6V5.8Q2,8.2 0.8,9.7M2,3.5H8.4M2,6.2H8.4" transform="translate(1411.64,793.00) scale(0.880)" fill="none" stroke="#666" stroke-width="1.193"/>
<line x1="1462.5" y1="784.3" x2="1462.5" y2="792" stroke="#ccd6eb"/>
<text x="1446.9" y="800.8" class="xl">9.</text>
<path d="M4.4,0.3L5.6,1.9M0.5,3.2H9.5M3.4,5.2Q3,7.6 0.8,9.6M6.4,5.2Q7.4,7.6 9.2,9.6" transform="translate(1459.67,793.00) scale(0.880)" fill="none" stroke="#666" stroke-width="1.193"/>
<path d="M2,0.6H8.4V8.4Q8.4,9.5 7,9.5M2,0.6V5.8Q2,8.2 0.8,9.7M2,3.5H8.4M2,6.2H8.4" transform="translate(1469.67,793.00) scale(0.880)" fill="none" stroke="#666" stroke-width="1.193"/>
<line x1="1523.6" y1="784.3" x2="1523.6" y2="792" stroke="#ccd6eb"/>
<text x="1504.9" y="800.8" class="xl">23.</text>
<path d="M4.4,0.3L5.6,1.9M0.5,3.2H9.5M3.4,5.2Q3,7.6 0.8,9.6M6.4,5.2Q7.4,7.6 9.2,9.6" transform="translate(1523.74,793.00) scale(0.880)" fill="none" stroke="#666" stroke-width="1.193"/>
<path d="M2,0.6H8.4V8.4Q8.4,9.5 7,9.5M2,0.6V5.8Q2,8.2 0.8,9.7M2,3.5H8.4M2,6.2H8.4" transform="translate(1533.74,793.00) scale(0.880)" fill="none" stroke="#666" stroke-width="1.193"/>
<line x1="1584.6" y1="784.3" x2="1584.6" y2="792" stroke="#ccd6eb"/>
<text x="1569.0" y="800.8" class="xl">7.</text>
<path d="M0.6,5.6L9,3.6M4,0.3V8Q4,9.3 5.5,9.3H7.6Q8.9,9.3 9,7.2" transform="translate(1581.78,793.00) scale(0.880)" fill="none" stroke="#666" stroke-width="1.193"/>
<path d="M2,0.6H8.4V8.4Q8.4,9.5 7,9.5M2,0.6V5.8Q2,8.2 0.8,9.7M2,3.5H8.4M2,6.2H8.4" transform="translate(1591.78,793.00) scale(0.880)" fill="none" stroke="#666" stroke-width="1.193"/>
<circle cx="470.2" cy="814.2" r="5.5" fill="#4572a7"/><text x="482" y="818.3" class="lg">PnL</text>
<line x1="519.6" y1="814.2" x2="534.3" y2="814.2" stroke="#d06060" stroke-width="1.5"/><text x="539" y="818.3" class="lg">Benchmark return</text>
<circle cx="663.6" cy="814.2" r="5.5" fill="#434348"/><text x="676" y="818.3" class="lg">Period P&amp;L</text>
<circle cx="760.6" cy="814.2" r="5.5" fill="#90ed7d"/><text x="773" y="818.3" class="lg">Trade Vol</text>
<circle cx="850.4" cy="814.2" r="5.5" fill="#f7a35c"/><text x="863" y="818.3" class="lg">Position long</text>
<circle cx="960.7" cy="814.2" r="5.5" fill="#8085e9"/><text x="973" y="818.3" class="lg">Position short</text>
<line x1="1068.7" y1="814.2" x2="1082.5" y2="814.2" stroke="#8b7d45" stroke-width="1.5"/><text x="1088" y="818.3" class="lg">Asset utilization</text>
<rect x="21.2" y="825.4" width="1588.5" height="18.9" fill="#c6d4e6"/>
<line x1="21.2" y1="825.6" x2="1609.7" y2="825.6" stroke="#b7c5d9" stroke-width="0.8"/>
<line x1="99.7" y1="825.4" x2="99.7" y2="844.3" stroke="#b9c7da" stroke-width="1"/>
<path d="M3.8,1.2C3.8,4.8 3,7.5 0.8,9.6M6,0.6C6.3,4 7.5,7 9.5,9.5" transform="translate(103.70,832.30) scale(0.820)" fill="none" stroke="#a9b3c2" stroke-width="1.220"/>
<path d="M2,0.6H8.4V8.4Q8.4,9.5 7,9.5M2,0.6V5.8Q2,8.2 0.8,9.7M2,3.5H8.4M2,6.2H8.4" transform="translate(113.70,832.30) scale(0.820)" fill="none" stroke="#a9b3c2" stroke-width="1.220"/>
<text x="123.7" y="840" class="nl">&#160;'24</text>
<line x1="235.4" y1="825.4" x2="235.4" y2="844.3" stroke="#b9c7da" stroke-width="1"/>
<path d="M1,2.8H6.8V8.3Q6.8,9.4 8,9.4H8.6Q9.4,9.4 9.4,7.6M4.4,0.2V2.8Q4.4,7 1,9.7" transform="translate(239.39,832.30) scale(0.820)" fill="none" stroke="#a9b3c2" stroke-width="1.220"/>
<path d="M2,0.6H8.4V8.4Q8.4,9.5 7,9.5M2,0.6V5.8Q2,8.2 0.8,9.7M2,3.5H8.4M2,6.2H8.4" transform="translate(249.39,832.30) scale(0.820)" fill="none" stroke="#a9b3c2" stroke-width="1.220"/>
<text x="259.4" y="840" class="nl">&#160;'24</text>
<line x1="366.7" y1="825.4" x2="366.7" y2="844.3" stroke="#b9c7da" stroke-width="1"/>
<path d="M0.5,4.2H9.5M5,0.2V9.8" transform="translate(370.70,832.30) scale(0.820)" fill="none" stroke="#a9b3c2" stroke-width="1.220"/>
<path d="M2,0.6H8.4V8.4Q8.4,9.5 7,9.5M2,0.6V5.8Q2,8.2 0.8,9.7M2,3.5H8.4M2,6.2H8.4" transform="translate(380.70,832.30) scale(0.820)" fill="none" stroke="#a9b3c2" stroke-width="1.220"/>
<text x="390.7" y="840" class="nl">&#160;'24</text>
<line x1="502.4" y1="825.4" x2="502.4" y2="844.3" stroke="#b9c7da" stroke-width="1"/>
<path d="M0.5,4.2H9.5M5,0.2V9.8" transform="translate(506.38,832.30) scale(0.820)" fill="none" stroke="#a9b3c2" stroke-width="1.220"/>
<path d="M0.5,5H9.5" transform="translate(516.38,832.30) scale(0.820)" fill="none" stroke="#a9b3c2" stroke-width="1.220"/>
<path d="M2,0.6H8.4V8.4Q8.4,9.5 7,9.5M2,0.6V5.8Q2,8.2 0.8,9.7M2,3.5H8.4M2,6.2H8.4" transform="translate(526.38,832.30) scale(0.820)" fill="none" stroke="#a9b3c2" stroke-width="1.220"/>
<text x="536.4" y="840" class="nl">&#160;'24</text>
<line x1="633.7" y1="825.4" x2="633.7" y2="844.3" stroke="#b9c7da" stroke-width="1"/>
<path d="M0.5,4.2H9.5M5,0.2V9.8" transform="translate(637.69,832.30) scale(0.820)" fill="none" stroke="#a9b3c2" stroke-width="1.220"/>
<path d="M1.5,1.8H8.5M0.5,8.6H9.5" transform="translate(647.69,832.30) scale(0.820)" fill="none" stroke="#a9b3c2" stroke-width="1.220"/>
<path d="M2,0.6H8.4V8.4Q8.4,9.5 7,9.5M2,0.6V5.8Q2,8.2 0.8,9.7M2,3.5H8.4M2,6.2H8.4" transform="translate(657.69,832.30) scale(0.820)" fill="none" stroke="#a9b3c2" stroke-width="1.220"/>
<text x="667.7" y="840" class="nl">&#160;'24</text>
<line x1="769.4" y1="825.4" x2="769.4" y2="844.3" stroke="#b9c7da" stroke-width="1"/>
<path d="M0.5,5H9.5" transform="translate(773.38,832.30) scale(0.820)" fill="none" stroke="#a9b3c2" stroke-width="1.220"/>
<path d="M2,0.6H8.4V8.4Q8.4,9.5 7,9.5M2,0.6V5.8Q2,8.2 0.8,9.7M2,3.5H8.4M2,6.2H8.4" transform="translate(783.38,832.30) scale(0.820)" fill="none" stroke="#a9b3c2" stroke-width="1.220"/>
<text x="793.4" y="840" class="nl">&#160;'25</text>
<line x1="905.1" y1="825.4" x2="905.1" y2="844.3" stroke="#b9c7da" stroke-width="1"/>
<path d="M1.5,1.8H8.5M0.5,8.6H9.5" transform="translate(909.07,832.30) scale(0.820)" fill="none" stroke="#a9b3c2" stroke-width="1.220"/>
<path d="M2,0.6H8.4V8.4Q8.4,9.5 7,9.5M2,0.6V5.8Q2,8.2 0.8,9.7M2,3.5H8.4M2,6.2H8.4" transform="translate(919.07,832.30) scale(0.820)" fill="none" stroke="#a9b3c2" stroke-width="1.220"/>
<text x="929.1" y="840" class="nl">&#160;'25</text>
<line x1="1027.6" y1="825.4" x2="1027.6" y2="844.3" stroke="#b9c7da" stroke-width="1"/>
<path d="M1.2,1H8.8M1.8,5H8.2M0.5,9.2H9.5" transform="translate(1031.62,832.30) scale(0.820)" fill="none" stroke="#a9b3c2" stroke-width="1.220"/>
<path d="M2,0.6H8.4V8.4Q8.4,9.5 7,9.5M2,0.6V5.8Q2,8.2 0.8,9.7M2,3.5H8.4M2,6.2H8.4" transform="translate(1041.62,832.30) scale(0.820)" fill="none" stroke="#a9b3c2" stroke-width="1.220"/>
<text x="1051.6" y="840" class="nl">&#160;'25</text>
<line x1="1163.3" y1="825.4" x2="1163.3" y2="844.3" stroke="#b9c7da" stroke-width="1"/>
<path d="M0.7,0.8H9.3V9.6M0.7,0.8V9.6M0.7,8.2H9.3M3.6,0.8V5Q3.6,6.2 2.4,6.4M6.1,0.8V5.6Q6.1,6.3 7,6.3H9.3" transform="translate(1167.31,832.30) scale(0.820)" fill="none" stroke="#a9b3c2" stroke-width="1.220"/>
<path d="M2,0.6H8.4V8.4Q8.4,9.5 7,9.5M2,0.6V5.8Q2,8.2 0.8,9.7M2,3.5H8.4M2,6.2H8.4" transform="translate(1177.31,832.30) scale(0.820)" fill="none" stroke="#a9b3c2" stroke-width="1.220"/>
<text x="1187.3" y="840" class="nl">&#160;'25</text>
<line x1="1294.6" y1="825.4" x2="1294.6" y2="844.3" stroke="#b9c7da" stroke-width="1"/>
<path d="M1.2,0.8H8.8M4.6,0.8L3.8,9.2M1.4,4.6H7.6V9.2M0.5,9.3H9.5" transform="translate(1298.62,832.30) scale(0.820)" fill="none" stroke="#a9b3c2" stroke-width="1.220"/>
<path d="M2,0.6H8.4V8.4Q8.4,9.5 7,9.5M2,0.6V5.8Q2,8.2 0.8,9.7M2,3.5H8.4M2,6.2H8.4" transform="translate(1308.62,832.30) scale(0.820)" fill="none" stroke="#a9b3c2" stroke-width="1.220"/>
<text x="1318.6" y="840" class="nl">&#160;'25</text>
<line x1="1430.3" y1="825.4" x2="1430.3" y2="844.3" stroke="#b9c7da" stroke-width="1"/>
<path d="M4.4,0.3L5.6,1.9M0.5,3.2H9.5M3.4,5.2Q3,7.6 0.8,9.6M6.4,5.2Q7.4,7.6 9.2,9.6" transform="translate(1434.31,832.30) scale(0.820)" fill="none" stroke="#a9b3c2" stroke-width="1.220"/>
<path d="M2,0.6H8.4V8.4Q8.4,9.5 7,9.5M2,0.6V5.8Q2,8.2 0.8,9.7M2,3.5H8.4M2,6.2H8.4" transform="translate(1444.31,832.30) scale(0.820)" fill="none" stroke="#a9b3c2" stroke-width="1.220"/>
<text x="1454.3" y="840" class="nl">&#160;'25</text>
<line x1="1561.6" y1="825.4" x2="1561.6" y2="844.3" stroke="#b9c7da" stroke-width="1"/>
<path d="M0.6,5.6L9,3.6M4,0.3V8Q4,9.3 5.5,9.3H7.6Q8.9,9.3 9,7.2" transform="translate(1565.62,832.30) scale(0.820)" fill="none" stroke="#a9b3c2" stroke-width="1.220"/>
<path d="M2,0.6H8.4V8.4Q8.4,9.5 7,9.5M2,0.6V5.8Q2,8.2 0.8,9.7M2,3.5H8.4M2,6.2H8.4" transform="translate(1575.62,832.30) scale(0.820)" fill="none" stroke="#a9b3c2" stroke-width="1.220"/>
<text x="1585.6" y="840" class="nl">&#160;'25</text>
<rect x="17.7" y="827.5" width="7.4" height="13.6" rx="1" fill="#f2f2f2" stroke="#999" stroke-width="1"/>
<line x1="20.2" y1="830.5" x2="20.2" y2="838.5" stroke="#999" stroke-width="1"/>
<line x1="22.6" y1="830.5" x2="22.6" y2="838.5" stroke="#999" stroke-width="1"/>
<rect x="1605.5" y="827.5" width="7.4" height="13.6" rx="1" fill="#f2f2f2" stroke="#999" stroke-width="1"/>
<line x1="1608.0" y1="830.5" x2="1608.0" y2="838.5" stroke="#999" stroke-width="1"/>
<line x1="1610.4" y1="830.5" x2="1610.4" y2="838.5" stroke="#999" stroke-width="1"/>
</svg>

<div class="tt">
 <div class="tth">2025-04-27 00:00:00</div>
 <div class="ttr"><span class="d" style="background:#4572a7"></span>PnL: <b>43507.8532</b> (21.75%)</div>
 <div class="ttr"><span class="d" style="background:#aa4643"></span>Benchmark return: <b>60.39%</b></div>
 <div class="ttr"><span class="d" style="background:#7c5e9e"></span>Period P&amp;L: <b>0.0000</b></div>
 <div class="ttr"><span class="d" style="background:#f7a35c"></span>Position long: <b>0</b></div>
 <div class="ttr"><span class="d" style="background:#8085e9"></span>Position short: <b>0</b></div>
 <div class="ttr"><span class="d" style="background:#4d3d00"></span>Asset utilization: <b>0.00%</b></div>
</div>

<div class="abs" style="left:1618px;top:783.5px;width:36px;height:36px;border-radius:50%;background:#fff;box-shadow:0 0 5px rgba(0,0,0,0.12)">
  <svg width="36" height="36"><g stroke="#222" stroke-width="1.3" fill="none"><line x1="11" y1="11.5" x2="25" y2="11.5"/><line x1="18" y1="15" x2="18" y2="24"/><path d="M15.5 17.5 L18 15 L20.5 17.5"/></g></svg>
</div>
<div class="abs" style="left:1648px;top:0;width:6px;height:860px;background:#f3f4f6"></div>
</body></html>
